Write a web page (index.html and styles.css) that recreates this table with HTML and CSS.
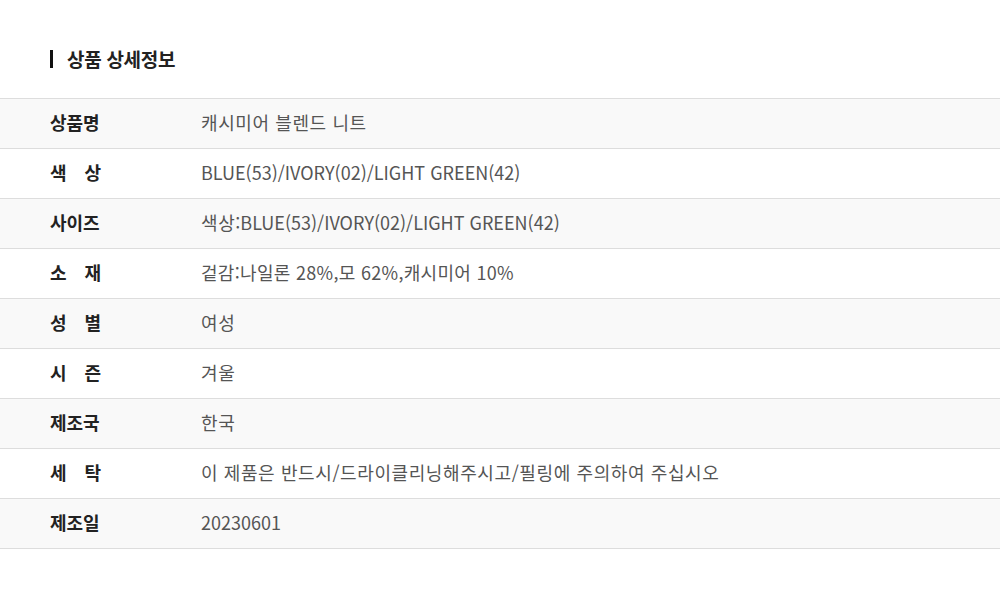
FILE: index.html
```html
<!DOCTYPE html>
<html lang="ko">
<head>
<meta charset="utf-8">
<link rel="stylesheet" href="styles.css">
</head>
<body>
<div class="page">
  <h2 class="title">상품 상세정보</h2>
  <div class="table">
    <div class="row alt"><div class="label">상품명</div><div class="value ko">캐시미어 블렌드 니트</div></div>
    <div class="row"><div class="label spread"><span>색</span><span>상</span></div><div class="value">BLUE(53)/IVORY(02)/LIGHT GREEN(42)</div></div>
    <div class="row alt"><div class="label">사이즈</div><div class="value"><span class="ko">색상</span>:BLUE(53)/IVORY(02)/LIGHT GREEN(42)</div></div>
    <div class="row"><div class="label spread"><span>소</span><span>재</span></div><div class="value mix">겉감:나일론 28%,모 62%,캐시미어 10%</div></div>
    <div class="row alt"><div class="label spread"><span>성</span><span>별</span></div><div class="value ko">여성</div></div>
    <div class="row"><div class="label spread"><span>시</span><span>즌</span></div><div class="value ko">겨울</div></div>
    <div class="row alt"><div class="label">제조국</div><div class="value ko">한국</div></div>
    <div class="row"><div class="label spread"><span>세</span><span>탁</span></div><div class="value ko">이 제품은 반드시/드라이클리닝해주시고/필링에 주의하여 주십시오</div></div>
    <div class="row alt"><div class="label">제조일</div><div class="value">20230601</div></div>
  </div>
</div>
</body>
</html>
```
FILE: styles.css
```css
* { box-sizing: border-box; }
html, body { margin: 0; padding: 0; background: #fff; }
body { font-family: "Noto Sans CJK KR", "Noto Sans", sans-serif; color: #222; }
.page { padding-top: 50px; }
.title {
  margin: 0 0 30px 50px;
  padding-left: 14px;
  border-left: 3px solid #111;
  font-size: 19px;
  font-weight: 700;
  line-height: 18px;
  height: 18px;
  display: flex;
  align-items: center;
  color: #222;
  letter-spacing: -0.3px;
}
.table { border-top: 1px solid #ddd; }
.row {
  display: flex;
  align-items: center;
  height: 50px;
  padding-bottom: 3px;
  border-bottom: 1px solid #ddd;
  background: #fff;
}
.row.alt { background: #f9f9f9; }
.label {
  width: 51px;
  margin-left: 50px;
  font-size: 18px;
  font-weight: 700;
  color: #222;
  white-space: nowrap;
}
.label.spread { display: flex; justify-content: space-between; }
.value {
  margin-left: 100px;
  font-size: 18px;
  font-weight: 400;
  color: #555;
  white-space: nowrap;
}
.ko { letter-spacing: 0.6px; }
.mix { letter-spacing: 0.3px; }
```
